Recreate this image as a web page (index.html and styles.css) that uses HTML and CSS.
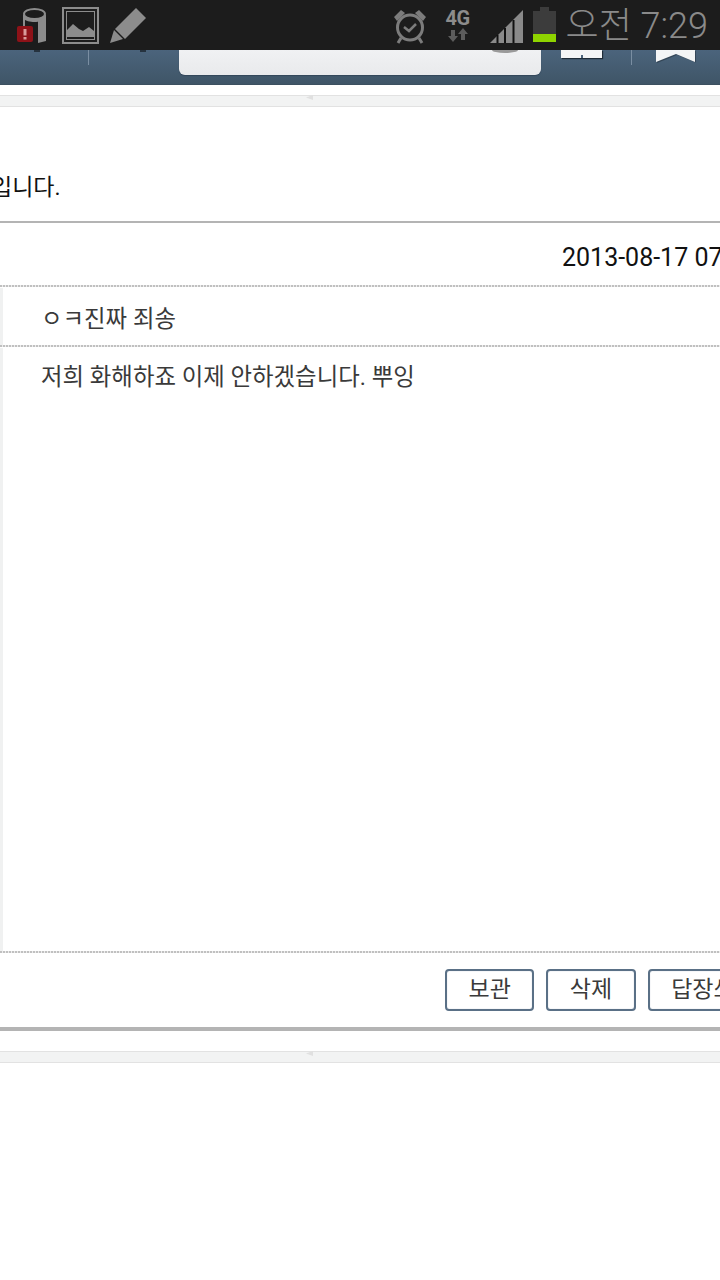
FILE: index.html
```html
<!DOCTYPE html>
<html lang="ko">
<head>
<meta charset="utf-8">
<title>쪽지</title>
<link rel="stylesheet" href="styles.css">
</head>
<body>
<div class="status">
  <div class="status-left">
    <svg class="ic-sd" width="30" height="36" viewBox="0 0 30 36">
      <path d="M7 8v14M28 8v26" fill="none" stroke="#8c8c8c" stroke-width="2"/>
      <path d="M21 13h8v21l-8 2z" fill="#8c8c8c"/>
      <ellipse cx="17.500" cy="7" rx="10.500" ry="5" fill="none" stroke="#8c8c8c" stroke-width="2"/>
      <path d="M7 8c3 5 18 5 21 0v4c-3 4-18 4-21 0z" fill="#8c8c8c"/>
      <rect x="0" y="19" width="16" height="16" rx="2" fill="#8e1218"/>
      <rect x="6.500" y="22" width="3" height="6.500" fill="#d89a9a"/>
      <rect x="6.500" y="30" width="3" height="2.500" fill="#d89a9a"/>
    </svg>
    <svg class="ic-pic" width="37" height="37" viewBox="0 0 37 37">
      <rect x="1" y="1" width="35" height="35" fill="none" stroke="#8c8c8c" stroke-width="2"/>
      <rect x="4.500" y="4.500" width="28" height="28" fill="none" stroke="#8c8c8c" stroke-width="1"/>
      <path d="M5 30v-7l6-6 6 5 4 2 6-4 5 4v6z" fill="#8c8c8c"/>
    </svg>
    <svg class="ic-pen" width="37" height="37" viewBox="0 0 37 37">
      <path d="M26 0l10 10-21 21-10-10z" fill="#8c8c8c" transform="translate(0 1)"/>
      <path d="M4 23l9 9-13 4z" fill="#8c8c8c"/>
    </svg>
  </div>
  <div class="status-right">
    <svg class="ic-alarm" width="34" height="36" viewBox="0 0 34 36">
      <circle cx="17" cy="19.500" r="12.500" fill="none" stroke="#7c7c7c" stroke-width="3"/>
      <path d="M11 19l5 4 7-7" fill="none" stroke="#7c7c7c" stroke-width="2.500"/>
      <path d="M1 9l7-7 4 3-8 8zM33 9l-7-7-4 3 8 8z" fill="#7c7c7c"/>
      <path d="M8 30l-3 5M26 30l3 5" stroke="#7c7c7c" stroke-width="3"/>
    </svg>
    <div class="net">
      <span class="net-label">4G</span>
      <svg width="20" height="14" viewBox="0 0 20 14">
        <path d="M5 14l-5-6h3V2h4v6h3zM15 0l5 6h-3v6h-4V6h-3z" fill="#5c5c5c"/>
      </svg>
    </div>
    <svg class="ic-signal" width="33" height="33" viewBox="0 0 33 33">
      <path d="M0 33L33 0v33z" fill="#8a8a8a"/>
      <path d="M7.500 33V25M15 33V18M23.500 33V10" stroke="#111" stroke-width="2" fill="none"/>
    </svg>
    <svg class="ic-batt" width="23" height="35" viewBox="0 0 23 35">
      <rect x="7" y="0" width="9" height="4" fill="#3c3c3c"/>
      <rect x="0" y="4" width="23" height="23" fill="#3c3c3c"/>
      <rect x="0" y="27" width="23" height="8" fill="#8fd400"/>
    </svg>
    <span class="clock">오전 7:29</span>
  </div>
</div>

<div class="nav">
  <span class="nav-tick nav-tick-a"></span>
  <span class="nav-sep nav-sep-a"></span>
  <span class="nav-tick nav-tick-b"></span>
  <div class="search"><span class="search-lens"></span></div>
  <div class="nav-doc"><span class="nav-doc-tick"></span></div>
  <span class="nav-sep nav-sep-b"></span>
  <svg class="nav-flag" width="40" height="13" viewBox="0 0 40 13"><path d="M0 0h40v12L20 4 0 12z" fill="#1f2c38" opacity=".5" transform="translate(1 1)"/><path d="M0 0h39v12L20 4 0 12z" fill="#f4f5f6"/></svg>
</div>

<div class="band-wrap"><div class="band"><span class="notch"></span></div></div>

<p class="notice">입니다.</p>

<div class="message">
  <div class="date">2013-08-17 07:29</div>
  <div class="row row-title"><span>ㅇㅋ진짜 죄송</span></div>
  <div class="row row-body"><span>저희 화해하죠 이제 안하겠습니다. 뿌잉</span></div>
  <div class="actions">
    <button class="btn">보관</button>
    <button class="btn">삭제</button>
    <button class="btn">답장쓰기</button>
  </div>
</div>

<div class="band-wrap band-wrap-low"><div class="band"><span class="notch"></span></div></div>
</body>
</html>
```
FILE: styles.css
```css
html, body {
  margin: 0;
  padding: 0;
}
body {
  width: 720px;
  height: 1280px;
  overflow: hidden;
  background: #fff;
  font-family: Roboto, "Noto Sans CJK KR", "Noto Sans", sans-serif;
  color: #333;
}
.status {
  height: 50px;
  background: #1c1c1c;
  display: flex;
  justify-content: space-between;
  box-sizing: border-box;
  padding: 6px 12px 0 17px;
}
.status-left {
  display: flex;
  align-items: flex-start;
}
.status-right {
  display: flex;
  align-items: flex-start;
}
.ic-sd { margin-top: 1px; }
.ic-pic { margin: 1px 0 0 15px; }
.ic-pen { margin: 1px 0 0 11px; }
.ic-alarm { margin: 2px 0 0 0; }
.net {
  width: 26px;
  margin-left: 18px;
  display: flex;
  flex-direction: column;
  align-items: center;
}
.net-label {
  font-size: 20px;
  line-height: 20px;
  margin-top: 2px;
  font-weight: 700;
  color: #8c8c8c;
  letter-spacing: -0.5px;
}
.net svg { margin-top: 0; }
.ic-signal { margin: 4px 0 0 19px; }
.ic-batt { margin: 1px 0 0 10px; }
.clock {
  margin: 2px 0 0 10px;
  font-size: 36px;
  line-height: 36px;
  font-weight: 300;
  color: #8a8a8a;
  white-space: nowrap;
}
.nav {
  height: 35px;
  box-sizing: border-box;
  background: linear-gradient(#4b647c, #3f5567);
  display: flex;
  align-items: flex-start;
  border-bottom: 1px solid #3c5060;
}
.nav-tick {
  flex: none;
  width: 6px;
  height: 2px;
  background: #26333f;
}
.nav-tick-a { margin-left: 34px; }
.nav-tick-b { margin-left: 51px; }
.nav-sep {
  flex: none;
  width: 1px;
  height: 15px;
  background: #7a8ea2;
}
.nav-sep-a { margin-left: 48px; }
.search {
  flex: none;
  width: 362px;
  height: 25px;
  margin-left: 33px;
  background: linear-gradient(#f0f1f3, #e9eaec);
  border-radius: 0 0 6px 6px;
  box-shadow: 0 1px 1px #33465a;
  display: flex;
  justify-content: flex-end;
}
.search-lens {
  width: 26px;
  height: 3px;
  margin-right: 23px;
  background: #9a9a9a;
  border-radius: 0 0 13px 13px / 0 0 3px 3px;
}
.nav-doc {
  flex: none;
  width: 41px;
  height: 8px;
  margin-left: 20px;
  background: #f4f5f6;
  box-shadow: 1px 1px 1px #1f2c38;
  display: flex;
  justify-content: center;
  align-items: flex-end;
}
.nav-doc-tick {
  width: 2px;
  height: 3px;
  background: #4b647c;
}
.nav-sep-b { margin-left: 29px; }
.nav-flag { flex: none; margin-left: 24px; }
.band-wrap {
  padding-top: 10px;
}
.band-wrap-low { padding-top: 20px; }
.band {
  height: 10px;
  background: #f2f3f3;
  border-top: 1px solid #e2e2e2;
  border-bottom: 1px solid #e2e2e2;
  position: relative;
}
.notch {
  position: absolute;
  left: 306px;
  top: -1px;
  width: 7px;
  height: 5px;
  background: #e0e0e0;
  clip-path: polygon(0 50%, 100% 0, 100% 100%);
}
.notice {
  margin: 0 0 0 -9px;
  height: 116px;
  box-sizing: border-box;
  padding-top: 68px;
  font-size: 23px;
  line-height: 26px;
  color: #111;
  border-bottom: 2px solid #b4b4b4;
}
.message {
  border-bottom: 4px solid #b4b4b4;
}
.date {
  height: 62px;
  box-sizing: border-box;
  padding: 20px 0 0 562px;
  font-size: 25px;
  line-height: 30px;
  color: #111;
  white-space: nowrap;
  overflow: hidden;
}
.row {
  background:
    repeating-linear-gradient(90deg, #c0c0c0 0 2px, #ececec 2px 3px) 0 0 / 100% 2px no-repeat,
    linear-gradient(#f0f1f1, #f0f1f1) 0 3px / 3px calc(100% - 3px) no-repeat;
  padding-left: 41px;
  font-size: 23.4px;
  color: #3a3a3a;
  box-sizing: border-box;
  white-space: nowrap;
}
.row-title {
  height: 60px;
  padding-top: 21px;
  line-height: 26px;
}
.row-body {
  height: 606px;
  padding-top: 19px;
  line-height: 26px;
}
.actions {
  background: repeating-linear-gradient(90deg, #c0c0c0 0 2px, #ececec 2px 3px) 0 0 / 100% 2px no-repeat;
  height: 76px;
  box-sizing: border-box;
  padding: 18px 0 0 445px;
  display: flex;
  align-items: flex-start;
  gap: 12px;
  white-space: nowrap;
  overflow: hidden;
}
.btn {
  flex: none;
  height: 42px;
  padding: 0 21.5px;
  background: #fff;
  border: 2px solid #5a7086;
  border-radius: 4px;
  box-shadow: inset 0 0 1px #9fb0c0;
  font: inherit;
  font-size: 23px;
  line-height: 36px;
  color: #3a3a3a;
}
```
